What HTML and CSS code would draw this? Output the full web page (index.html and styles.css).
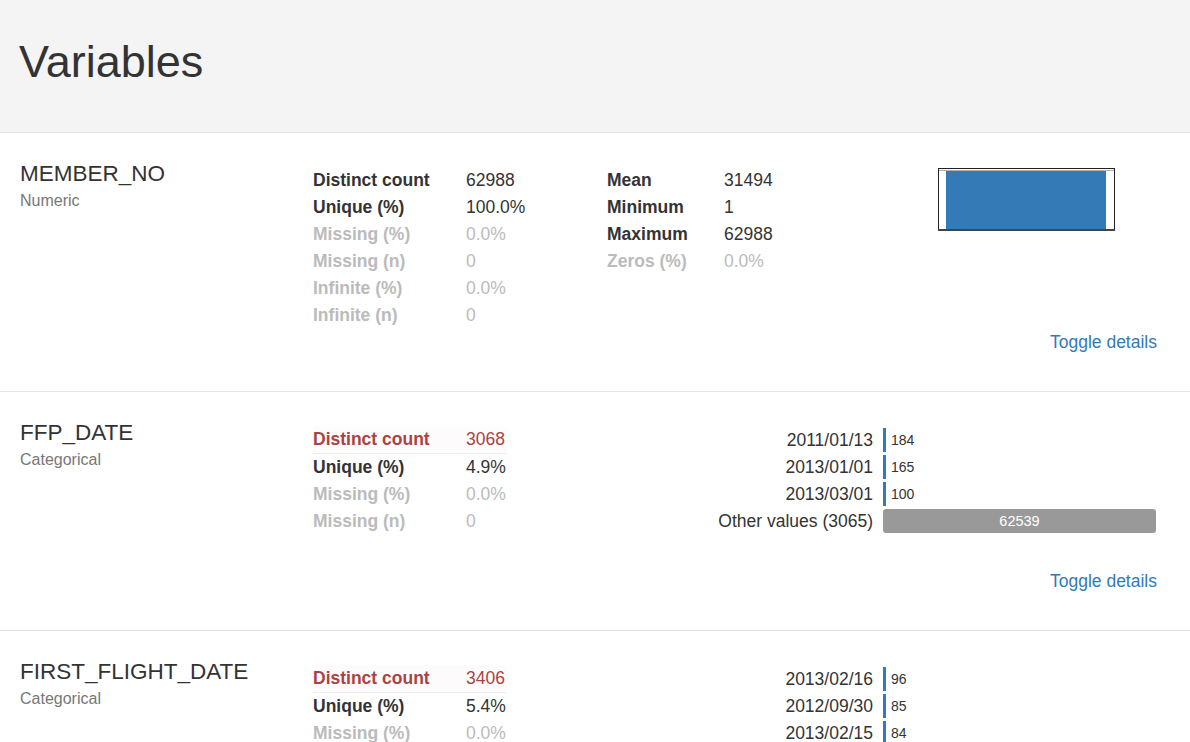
FILE: index.html
```html
<!DOCTYPE html>
<html lang="en">
<head>
<meta charset="utf-8">
<title>Variables</title>
<link rel="stylesheet" href="styles.css">
</head>
<body>
<header class="page-header">
  <h1>Variables</h1>
</header>

<section class="var">
  <div class="var-name">
    <p class="name">MEMBER_NO</p>
    <p class="type">Numeric</p>
  </div>
  <table class="stats">
    <tr><th>Distinct count</th><td>62988</td></tr>
    <tr><th>Unique (%)</th><td>100.0%</td></tr>
    <tr class="ignore"><th>Missing (%)</th><td>0.0%</td></tr>
    <tr class="ignore"><th>Missing (n)</th><td>0</td></tr>
    <tr class="ignore"><th>Infinite (%)</th><td>0.0%</td></tr>
    <tr class="ignore"><th>Infinite (n)</th><td>0</td></tr>
  </table>
  <table class="stats stats-2">
    <tr><th>Mean</th><td>31494</td></tr>
    <tr><th>Minimum</th><td>1</td></tr>
    <tr><th>Maximum</th><td>62988</td></tr>
    <tr class="ignore"><th>Zeros (%)</th><td>0.0%</td></tr>
  </table>
  <div class="hist">
    <svg width="177" height="63" viewBox="0 0 177 63">
      <rect x="0.5" y="0.5" width="176" height="62" fill="#fff" stroke="#222" stroke-width="1"/>
      <line x1="1" y1="2.5" x2="176" y2="2.5" stroke="#b0b0b0" stroke-width="1"/>
      <rect x="8" y="3" width="160" height="59" fill="#337ab7"/>
      <line x1="0" y1="62" x2="177" y2="62" stroke="#444" stroke-width="2"/>
    </svg>
  </div>
  <div class="toggle"><a href="#">Toggle details</a></div>
</section>

<section class="var">
  <div class="var-name">
    <p class="name">FFP_DATE</p>
    <p class="type">Categorical</p>
  </div>
  <table class="stats">
    <tr class="alert"><th>Distinct count</th><td>3068</td></tr>
    <tr><th>Unique (%)</th><td>4.9%</td></tr>
    <tr class="ignore"><th>Missing (%)</th><td>0.0%</td></tr>
    <tr class="ignore"><th>Missing (n)</th><td>0</td></tr>
  </table>
  <table class="freq">
    <tr><th>2011/01/13</th><td><div class="bar-row"><span class="bar" style="width:3px"></span><span class="count">184</span></div></td></tr>
    <tr><th>2013/01/01</th><td><div class="bar-row"><span class="bar" style="width:3px"></span><span class="count">165</span></div></td></tr>
    <tr><th>2013/03/01</th><td><div class="bar-row"><span class="bar" style="width:3px"></span><span class="count">100</span></div></td></tr>
    <tr class="other"><th>Other values (3065)</th><td><div class="bar-row"><span class="bar bar-other" style="width:100%">62539</span></div></td></tr>
  </table>
  <div class="toggle"><a href="#">Toggle details</a></div>
</section>

<section class="var">
  <div class="var-name">
    <p class="name">FIRST_FLIGHT_DATE</p>
    <p class="type">Categorical</p>
  </div>
  <table class="stats">
    <tr class="alert"><th>Distinct count</th><td>3406</td></tr>
    <tr><th>Unique (%)</th><td>5.4%</td></tr>
    <tr class="ignore"><th>Missing (%)</th><td>0.0%</td></tr>
    <tr class="ignore"><th>Missing (n)</th><td>0</td></tr>
  </table>
  <table class="freq">
    <tr><th>2013/02/16</th><td><div class="bar-row"><span class="bar" style="width:3px"></span><span class="count">96</span></div></td></tr>
    <tr><th>2012/09/30</th><td><div class="bar-row"><span class="bar" style="width:3px"></span><span class="count">85</span></div></td></tr>
    <tr><th>2013/02/15</th><td><div class="bar-row"><span class="bar" style="width:3px"></span><span class="count">84</span></div></td></tr>
    <tr class="other"><th>Other values (3403)</th><td><div class="bar-row"><span class="bar bar-other" style="width:100%">62689</span></div></td></tr>
  </table>
  <div class="toggle"><a href="#">Toggle details</a></div>
</section>
</body>
</html>
```

FILE: styles.css
```css
html, body {
  margin: 0;
  padding: 0;
  background: #fff;
}

body {
  font-family: "Liberation Sans", Arial, Helvetica, sans-serif;
  font-size: 17.5px;
  color: #333;
  overflow: hidden;
}

.page-header {
  background: #f4f4f4;
  border-bottom: 1px solid #e3e3e3;
  height: 133px;
  box-sizing: border-box;
  padding: 37px 0 0 19px;
}

.page-header h1 {
  margin: 0;
  font-size: 45px;
  font-weight: normal;
  line-height: 1.1;
  color: #333;
}

.var {
  display: grid;
  grid-template-columns: 293px 294px 331px 1fr;
  align-items: start;
  justify-items: start;
  padding: 34px 0 36px 20px;
  border-bottom: 1px solid #e3e3e3;
}

.var-name {
  margin-top: -5px;
}

.var-name p {
  margin: 0;
}

.name {
  font-size: 22.5px;
  line-height: 1.1;
  color: #333;
}

.type {
  margin-top: 3.5px !important;
  font-size: 16px;
  line-height: 1.4;
  color: #777;
}

.stats {
  border-collapse: collapse;
  border-spacing: 0;
}

.stats th,
.stats td {
  padding: 0;
  height: 27px;
  line-height: 27px;
  white-space: nowrap;
  text-align: left;
  vertical-align: middle;
}

.stats th {
  width: 153px;
  font-weight: bold;
  color: #333;
}

.stats-2 th {
  width: 117px;
}

.stats td {
  color: #333;
}

.stats .ignore th,
.stats .ignore td {
  color: #bbb;
}

.stats .alert th,
.stats .alert td {
  color: #a94442;
  background: #fdfbfb;
  border-bottom: 1px solid #f1eded;
}

.stats .alert th {
  border-radius: 4px 0 0 4px;
}

.stats .alert td {
  border-radius: 0 4px 4px 0;
  padding-right: 2px;
}

.hist {
  margin-top: 1px;
  line-height: 0;
}

.hist svg {
  display: block;
}

.freq {
  grid-column: 3 / 5;
  border-collapse: collapse;
  border-spacing: 0;
  width: 549px;
  margin-bottom: 34px;
}

.freq tr {
  height: 27px;
}

.freq th,
.freq td {
  padding: 0;
  vertical-align: top;
}

.freq th {
  width: 266px;
  text-align: right;
  font-weight: normal;
  line-height: 26px;
  padding: 1px 10px 0 0;
  color: #333;
  white-space: nowrap;
}

.bar-row {
  display: flex;
  align-items: center;
  margin-top: 2px;
  height: 24px;
}

.bar {
  display: block;
  height: 24px;
  background: #337ab7;
  flex: none;
}

.count {
  margin-left: 5px;
  font-size: 14px;
  line-height: 24px;
  color: #333;
}

.bar-other {
  background: #999;
  color: #fff;
  border-radius: 3px;
  font-size: 14.5px;
  line-height: 24px;
  text-align: center;
}

.toggle {
  grid-column: 1 / -1;
  justify-self: end;
  padding-right: 33px;
  line-height: 25px;
  margin-top: 1px;
}

.toggle a {
  color: #337ab7;
  text-decoration: none;
}
```
